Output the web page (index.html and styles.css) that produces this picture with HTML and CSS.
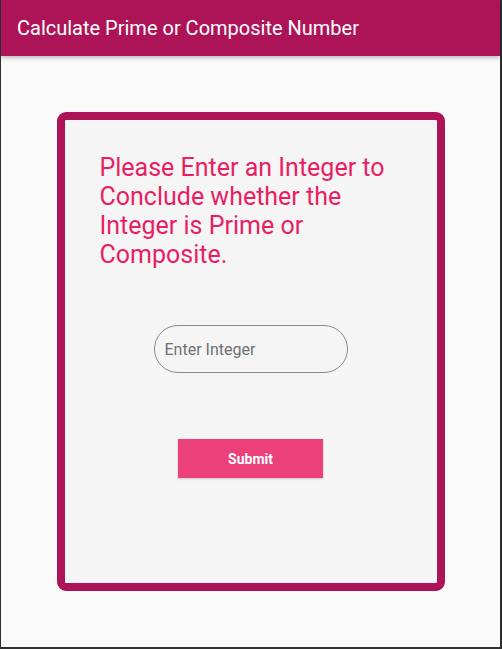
FILE: index.html
```html
<!DOCTYPE html>
<html>
<head>
<meta charset="utf-8">
<link rel="stylesheet" href="styles.css">
</head>
<body>
<div class="frame">
  <header class="appbar">
    <h1 class="title">Calculate Prime or Composite Number</h1>
  </header>
  <main class="content">
    <section class="card">
      <p class="prompt">Please Enter an Integer to Conclude whether the Integer is Prime or Composite.</p>
      <input class="field" type="text" placeholder="Enter Integer">
      <button class="submit">Submit</button>
    </section>
  </main>
</div>
</body>
</html>
```
FILE: styles.css
```css
* { box-sizing: border-box; }
html, body { margin: 0; padding: 0; }
body {
  font-family: Roboto, "Noto Sans", sans-serif;
  background: #fafafa;
}
.frame {
  width: 502px;
  height: 649px;
  border-left: 1px solid #2f2f2f;
  border-right: 2px solid #2f2f2f;
  border-bottom: 2px solid #2f2f2f;
  display: flex;
  flex-direction: column;
  background: #fafafa;
}
.appbar {
  height: 56px;
  flex: none;
  background: #ad1457;
  display: flex;
  align-items: center;
  padding-left: 16px;
  box-shadow: 0 2px 4px rgba(0,0,0,0.25);
  position: relative;
  z-index: 1;
}
.title {
  margin: 0;
  color: #fff;
  font-size: 20px;
  font-weight: 400;
  line-height: 24px;
}
.content {
  flex: 1;
  padding: 56px 0;
  display: flex;
  justify-content: center;
}
.card {
  width: 388px;
  height: 100%;
  border: 8px solid #ad1457;
  border-radius: 9px;
  background: #f5f5f5;
  padding: 33px 35px;
  display: flex;
  flex-direction: column;
  align-items: center;
}
.prompt {
  margin: 0;
  align-self: stretch;
  color: #e91e63;
  font-size: 25px;
  line-height: 29px;
  font-weight: 400;
}
.field {
  margin-top: 56px;
  width: 194px;
  height: 48px;
  border: 1px solid #8a8a8a;
  border-radius: 24px;
  background: transparent;
  padding: 0 10px;
  font-family: Roboto, sans-serif;
  font-size: 16px;
  color: #333;
  outline: none;
}
.field::placeholder { color: #707070; }
.submit {
  margin-top: 66px;
  width: 145px;
  height: 39px;
  border: none;
  background: #ec407a;
  color: #fff;
  font-family: Roboto, sans-serif;
  font-weight: 700;
  font-size: 14px;
  box-shadow: 0 1px 2px rgba(0,0,0,0.2);
}
```
